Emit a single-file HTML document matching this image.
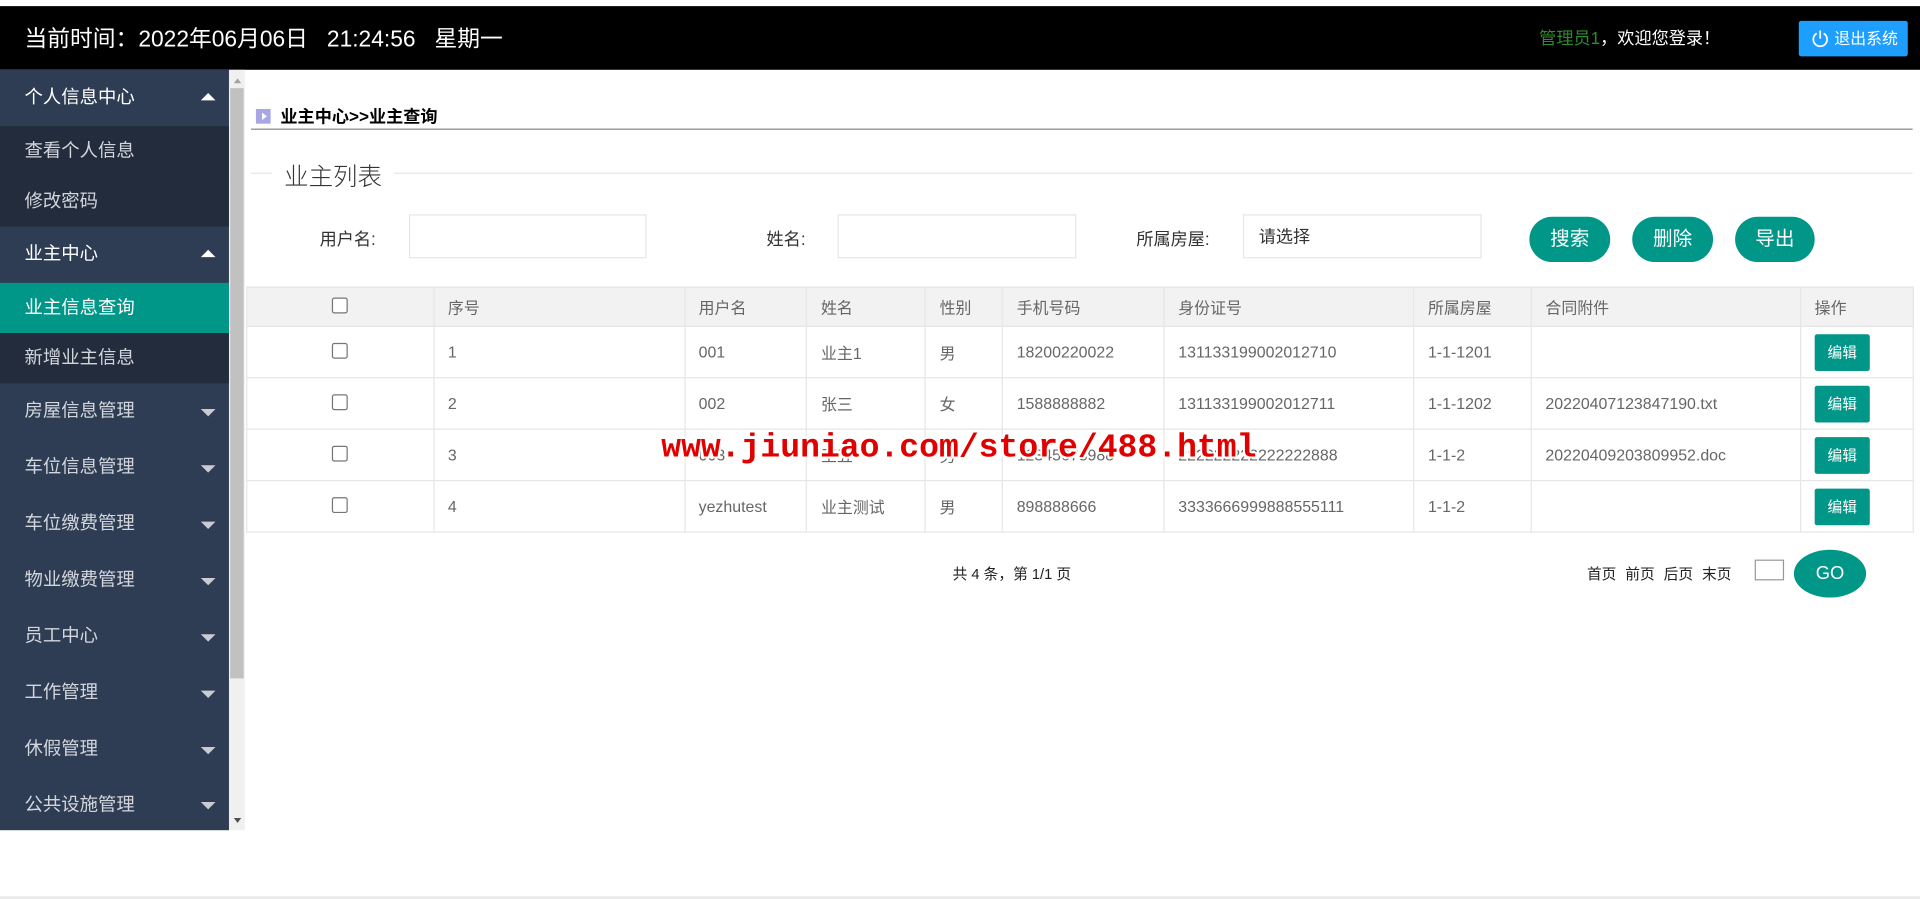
<!DOCTYPE html>
<html><head><meta charset="utf-8"><style>
html,body{margin:0;padding:0;width:1920px;height:899px;overflow:hidden;background:#fff;}
#w{position:absolute;left:0;top:0;width:1568px;height:734px;transform:scale(1.22449);transform-origin:0 0;font-family:"Liberation Sans","Noto Sans CJK SC",sans-serif;}
.a{position:absolute;}
.hd{left:0;top:5px;width:1568px;height:52px;background:#000;}
.side{left:0;top:57px;width:187px;height:621px;background:#2e3d54;}
.it{position:absolute;left:0;width:187px;color:#d2d6dc;font-size:15px;box-sizing:border-box;padding-left:20px;}
.sub{background:#222c3c;}
.tri{position:absolute;right:11px;width:0;height:0;border-left:6px solid transparent;border-right:6px solid transparent;}
.up{border-bottom:6px solid #fff;top:50%;margin-top:-4px;}
.dn{border-top:6px solid #c9ccd2;top:50%;margin-top:-2px;}
.btn{background:#009688;color:#fff;border-radius:19px;text-align:center;font-size:16px;}
table{border-collapse:collapse;position:absolute;left:201px;top:234px;width:1362px;font-size:13px;color:#666;}
td{border:1px solid #e6e6e6;padding:0 0 0 11px;height:41px;}
tr.h td{background:#f2f2f2;height:31px;}
.cb{width:11px;height:11px;border:1px solid #767676;border-radius:2px;display:inline-block;background:#fff;}
.ed{display:inline-block;background:#009688;color:#fff;font-size:12px;width:45px;height:30px;line-height:30px;text-align:center;border-radius:2px;}
.inp{border:1px solid #e6e6e6;background:#fff;height:36px;box-sizing:border-box;}
</style></head><body><div id="w">
<div class="a hd"></div>
<div class="a" style="left:20px;top:17px;color:#fff;font-size:18.6px;white-space:pre;">当前时间：2022年06月06日   21:24:56   星期一</div>
<div class="a" style="left:1257px;top:21px;font-size:14px;color:#fff;"><span style="color:#2e8b2e">管理员1</span>，欢迎您登录！</div>
<div class="a" style="left:1469px;top:17px;width:89px;height:29px;background:#1e9fff;border-radius:2px;color:#fff;font-size:13px;line-height:29px;">
<svg class="a" style="left:10px;top:7px" width="15" height="15" viewBox="0 0 16 16"><path d="M5 3.5A6 6 0 1 0 11 3.5" fill="none" stroke="#fff" stroke-width="1.5"/><path d="M8 1v7" stroke="#fff" stroke-width="1.5"/></svg>
<span style="position:absolute;left:29px;">退出系统</span></div>

<div class="a side">
<div class="it" style="top:0;height:46px;line-height:46px;color:#fff;">个人信息中心<span class="tri up"></span></div>
<div class="it sub" style="top:46px;height:41px;line-height:41px;">查看个人信息</div>
<div class="it sub" style="top:87px;height:41px;line-height:41px;">修改密码</div>
<div class="it" style="top:128px;height:46px;line-height:46px;color:#fff;">业主中心<span class="tri up"></span></div>
<div class="it" style="top:174px;height:41px;line-height:41px;background:#009688;color:#fff;">业主信息查询</div>
<div class="it sub" style="top:215px;height:41px;line-height:41px;">新增业主信息</div>
<div class="it" style="top:256px;height:46px;line-height:46px;">房屋信息管理<span class="tri dn"></span></div>
<div class="it" style="top:302px;height:46px;line-height:46px;">车位信息管理<span class="tri dn"></span></div>
<div class="it" style="top:348px;height:46px;line-height:46px;">车位缴费管理<span class="tri dn"></span></div>
<div class="it" style="top:394px;height:46px;line-height:46px;">物业缴费管理<span class="tri dn"></span></div>
<div class="it" style="top:440px;height:46px;line-height:46px;">员工中心<span class="tri dn"></span></div>
<div class="it" style="top:486px;height:46px;line-height:46px;">工作管理<span class="tri dn"></span></div>
<div class="it" style="top:532px;height:46px;line-height:46px;">休假管理<span class="tri dn"></span></div>
<div class="it" style="top:578px;height:43px;line-height:46px;">公共设施管理<span class="tri dn"></span></div>
</div>
<div class="a" style="left:187px;top:57px;width:13px;height:621px;background:#f0f0f0;"></div>
<div class="a" style="left:188px;top:72px;width:11px;height:482px;background:#c1c1c1;"></div>
<div class="a" style="left:191px;top:64px;border-left:3px solid transparent;border-right:3px solid transparent;border-bottom:4px solid #a3a3a3;"></div>
<div class="a" style="left:191px;top:668px;border-left:3px solid transparent;border-right:3px solid transparent;border-top:4px solid #505050;"></div>
<div class="a" style="left:0;top:732px;width:1568px;height:2px;background:#e8e8e8;"></div>

<div class="a" style="left:209px;top:89px;width:12px;height:12px;background:#a9a6e6;"></div>
<div class="a" style="left:214px;top:92px;border-top:3px solid transparent;border-bottom:3px solid transparent;border-left:4px solid #fff;"></div>
<div class="a" style="left:229px;top:85px;font-size:14px;font-weight:bold;color:#000;">业主中心&gt;&gt;业主查询</div>
<div class="a" style="left:205px;top:105px;width:1357px;height:1px;background:#888;"></div>
<div class="a" style="left:205px;top:141px;width:1357px;height:1px;background:#e6e6e6;"></div>
<div class="a" style="left:222px;top:128px;padding:0 10px;background:#fff;font-size:20px;color:#333;font-weight:300;">业主列表</div>

<div class="a" style="left:261px;top:185px;font-size:14px;color:#333;">用户名:</div>
<div class="a inp" style="left:334px;top:175px;width:194px;"></div>
<div class="a" style="left:626px;top:185px;font-size:14px;color:#333;">姓名:</div>
<div class="a inp" style="left:684px;top:175px;width:195px;"></div>
<div class="a" style="left:928px;top:185px;font-size:14px;color:#333;">所属房屋:</div>
<div class="a inp" style="left:1015px;top:175px;width:195px;font-size:14px;color:#333;line-height:34px;padding-left:12px;">请选择</div>
<div class="a btn" style="left:1249px;top:177px;width:66px;height:37px;line-height:37px;">搜索</div>
<div class="a btn" style="left:1333px;top:177px;width:66px;height:37px;line-height:37px;">删除</div>
<div class="a btn" style="left:1417px;top:177px;width:65px;height:37px;line-height:37px;">导出</div>

<table>
<colgroup><col style="width:153px"><col style="width:205px"><col style="width:100px"><col style="width:97px"><col style="width:63px"><col style="width:132px"><col style="width:204px"><col style="width:96px"><col style="width:220px"><col style="width:92px"></colgroup>
<tr class="h"><td style="text-align:center;padding:0"><span class="cb"></span></td><td>序号</td><td>用户名</td><td>姓名</td><td>性别</td><td>手机号码</td><td>身份证号</td><td>所属房屋</td><td>合同附件</td><td>操作</td></tr>
<tr><td style="text-align:center;padding:0"><span class="cb"></span></td><td>1</td><td>001</td><td>业主1</td><td>男</td><td>18200220022</td><td>131133199002012710</td><td>1-1-1201</td><td></td><td><span class="ed">编辑</span></td></tr>
<tr><td style="text-align:center;padding:0"><span class="cb"></span></td><td>2</td><td>002</td><td>张三</td><td>女</td><td>1588888882</td><td>131133199002012711</td><td>1-1-1202</td><td>20220407123847190.txt</td><td><span class="ed">编辑</span></td></tr>
<tr><td style="text-align:center;padding:0"><span class="cb"></span></td><td>3</td><td>003</td><td>王五</td><td>男</td><td>12345678988</td><td>222222222222222888</td><td>1-1-2</td><td>20220409203809952.doc</td><td><span class="ed">编辑</span></td></tr>
<tr><td style="text-align:center;padding:0"><span class="cb"></span></td><td>4</td><td>yezhutest</td><td>业主测试</td><td>男</td><td>898888666</td><td>3333666999888555111</td><td>1-1-2</td><td></td><td><span class="ed">编辑</span></td></tr>
</table>
<div class="a" style="left:540px;top:352px;font-family:'Liberation Mono',monospace;font-weight:bold;font-size:27px;color:#e00000;text-shadow:1.5px 1.5px 0 #fff,-1.5px -1.5px 0 #fff,1.5px -1.5px 0 #fff,-1.5px 1.5px 0 #fff;white-space:nowrap;">www.jiuniao.com/store/488.html</div>

<div class="a" style="left:778px;top:460px;font-size:12px;color:#222;">共 4 条，第 1/1 页</div>
<div class="a" style="left:1296px;top:460px;font-size:12px;color:#222;word-spacing:4px;">首页 前页 后页 末页</div>
<div class="a" style="left:1433px;top:457px;width:24px;height:17px;border:1px solid #999;box-sizing:border-box;"></div>
<div class="a" style="left:1465px;top:449px;width:59px;height:39px;border-radius:50%;background:#009688;color:#fff;font-size:15px;text-align:center;line-height:39px;">GO</div>
</div></body></html>
